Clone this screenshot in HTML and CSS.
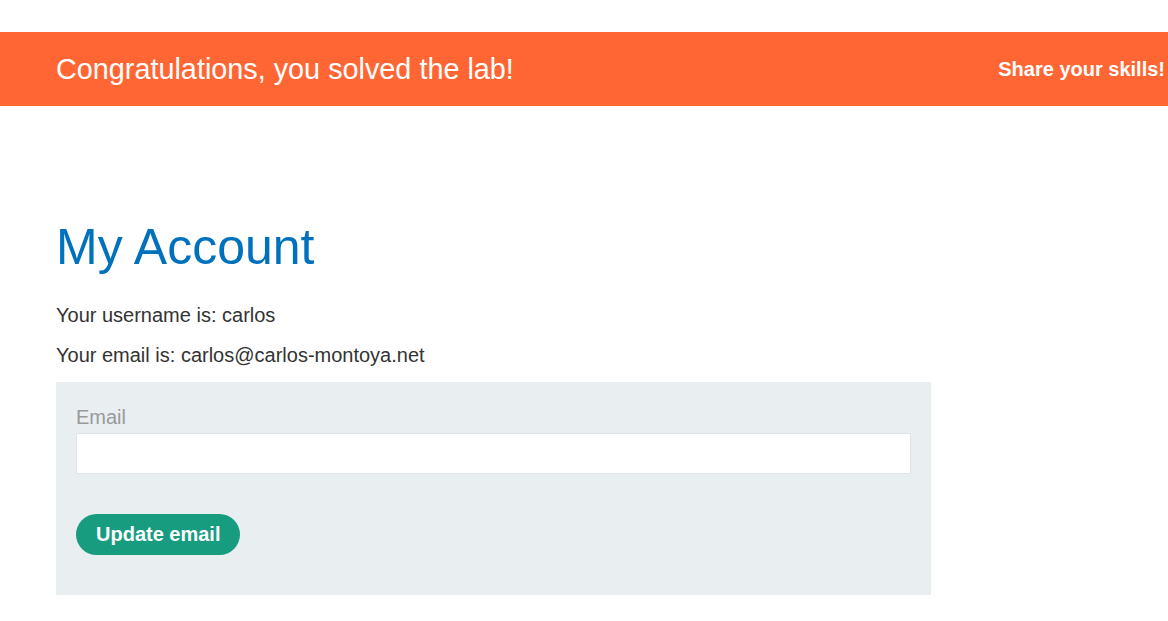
FILE: index.html
```html
<!DOCTYPE html>
<html>
<head>
<meta charset="utf-8">
<link rel="stylesheet" href="styles.css">
</head>
<body>
<div class="banner">
  <h4 class="banner-title">Congratulations, you solved the lab!</h4>
  <span class="share">Share your skills!</span>
</div>
<main class="account">
  <h1 class="title">My Account</h1>
  <p class="info">Your username is: carlos</p>
  <p class="info">Your email is: <span>carlos@carlos-montoya.net</span></p>
  <form class="email-form">
    <label class="field-label">Email</label>
    <input class="field-input" type="email" name="email">
    <button class="btn" type="button">Update email</button>
  </form>
</main>
</body>
</html>
```

FILE: styles.css
```css
html, body {
  margin: 0;
  padding: 0;
  background: #ffffff;
  font-family: "Liberation Sans", Arial, sans-serif;
  color: #333332;
}

.banner {
  margin-top: 32px;
  height: 74px;
  background: #ff6633;
  display: flex;
  align-items: center;
  justify-content: space-between;
  padding: 0 3px 0 56px;
  color: #ffffff;
  overflow: hidden;
}

.banner-title {
  margin: 0;
  font-size: 28.8px;
  font-weight: normal;
}

.share {
  font-size: 20px;
  font-weight: bold;
  white-space: nowrap;
}

.account {
  padding: 0 56px;
  width: 875px;
}

.title {
  margin: 113px 0 0;
  font-size: 50px;
  font-weight: normal;
  color: #0071bc;
  line-height: 56px;
}

.info {
  margin: 29px 0 0;
  font-size: 20px;
  line-height: 22px;
}

.info + .info {
  margin-top: 18px;
}

.email-form {
  margin-top: 16px;
  background: #e9eef1;
  padding: 24px 20px 40px;
  display: flex;
  flex-direction: column;
  align-items: flex-start;
}

.field-label {
  font-size: 20px;
  line-height: 23px;
  color: #999999;
  margin-bottom: 4px;
}

.field-input {
  box-sizing: border-box;
  width: 100%;
  height: 41px;
  border: 1px solid #e0e3e6;
  background: #ffffff;
  margin: 0 0 40px;
  padding: 0 8px;
  outline: none;
}

.btn {
  height: 41px;
  padding: 0 20px;
  border: none;
  border-radius: 21px;
  background: #179c80;
  color: #ffffff;
  font-family: "Liberation Sans", Arial, sans-serif;
  font-size: 20px;
  font-weight: bold;
}
```
